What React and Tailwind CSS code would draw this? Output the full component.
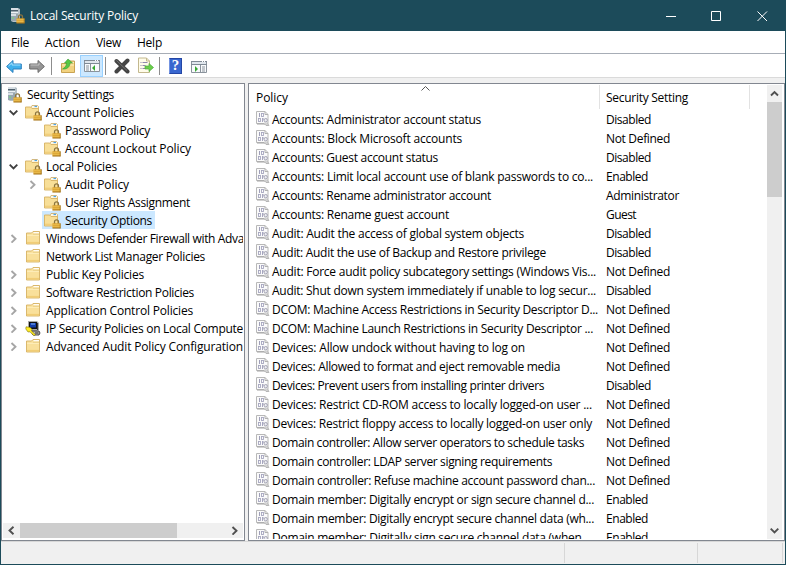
import React, { useLayoutEffect, useRef, useState } from "react";

// A label whose tracking is adjusted so that the text spans exactly `w` pixels.
function Fit({ w, pad = "pt-px", children }) {
  const ref = useRef(null);
  const [spacing, setSpacing] = useState(0);
  useLayoutEffect(() => {
    const natural = ref.current.getBoundingClientRect().width;
    setSpacing((w - natural) / children.length);
  }, [w, children]);
  return (
    <span ref={ref} className={`inline-block shrink-0 ${pad}`} style={{ letterSpacing: `${spacing}px` }}>
      {children}
    </span>
  );
}

const Padlock = ({ x = 8, y = 7 }) => (
  <g transform={`translate(${x} ${y})`}>
    <path d="M2 4.5V2.6C2 1.2 2.9.6 4 .6s2 .6 2 2v1.900" fill="none" stroke="#8a7440" strokeWidth="1.300" />
    <rect x="0" y="4" width="8" height="5" fill="#d9a02c" />
    <path d="M0 5.500h8M0 7.500h8" stroke="#f3cc62" strokeWidth="0.800" />
    <path d="M0 8.700h8M7.700 4v5" stroke="#8f651a" strokeWidth="0.700" />
  </g>
);

const ServerIcon = () => (
  <svg className="block h-[17px] w-4 shrink-0" viewBox="0 0 16 17">
    <path d="M1 1h7l2 1v13H3l-2-1z" fill="#b5c0c7" />
    <path d="M1 1h7v13H1z" fill="#98a7b0" />
    <path d="M1 2h7M1 5.500h7M1 8h5" stroke="#edf2f5" strokeWidth="1.300" />
    <path d="M1 3.700h7" stroke="#3d515e" strokeWidth="1" />
    <path d="M2 11h2" stroke="#6fe06f" strokeWidth="1" />
    <Padlock x={6.500} y={7.300} />
  </svg>
);

const FolderIcon = ({ locked }) => (
  <svg className="block h-[17px] w-[17px] shrink-0" viewBox="0 0 17 17">
    {locked ? (
      <>
        <path d="M6 3l1-1.500h5.500l1 1V10H6z" fill="#fdf7e3" stroke="#cdaa62" strokeWidth="0.800" />
        <path d="M9.500 2.500h2.500" stroke="#4da3e8" strokeWidth="1.200" />
        <path d="M.5 3h5L7 4.500h6.500v9.500H.5z" fill="#f8df98" stroke="#d6b162" strokeWidth="0.900" />
        <path d="M1 12.500h11" stroke="#f1cf7c" strokeWidth="1.800" />
        <Padlock x={8.500} y={7.300} />
      </>
    ) : (
      <>
        <path d="M1.500 3h5L8 1.500h6.500v12.500h-13z" fill="#f9e09b" stroke="#d6b162" strokeWidth="0.900" />
        <path d="M8.500 2.700h5.500" stroke="#fff" strokeWidth="1.200" />
        <path d="M8 4.300h6" stroke="#d9b86b" strokeWidth="0.600" />
        <path d="M2 5.300h12" stroke="#fff3c8" strokeWidth="0.800" />
        <path d="M2 12.700h12" stroke="#f1cd76" strokeWidth="1.600" />
      </>
    )}
  </svg>
);

const IpIcon = () => (
  <svg className="block h-[17px] w-[17px] shrink-0" viewBox="0 0 17 17">
    <path d="M3 1h9l2 2v7l-2 1H5L3 10z" fill="#a8a8a8" />
    <path d="M4 2h8v7H4z" fill="#111" />
    <path d="M5 3h6v4.500H5z" fill="#123ca8" />
    <path d="M6 4h4" stroke="#82b7ff" />
    <path d="M12.500 3v7" stroke="#333" />
    <path d="M6 11h8l1 2-1 2H8z" fill="#b7b7b7" stroke="#222" strokeWidth="0.800" />
    <path d="M10 13h3.500" stroke="#333" />
    <path d="M1 6.800l4 .5 2 2-.5 1.500 4 4-1.500 1-4-4-2 .2L.8 9z" fill="#ffed26" stroke="#665900" strokeWidth="0.500" />
  </svg>
);

const PolicyIcon = () => (
  <svg className="block h-[15px] w-[14px] shrink-0" viewBox="0 0 14 15">
    <path d="M.5.5h8.500l3 3v9.500l1 1.500h-3l-2-2H.5z" fill="#fafafa" stroke="#b8b8b8" />
    <path d="M9 .5v3h3" fill="none" stroke="#b0b0b0" />
    <path d="M1 13h7" stroke="#a4a4a4" />
    <path d="M3.500 2v4M7.500 7.500v1" stroke="#9f9fb8" />
    <rect x="5.500" y="2.500" width="2" height="3" fill="none" stroke="#a6a6bf" strokeWidth="0.900" />
    <rect x="2.500" y="7.500" width="2" height="3" fill="none" stroke="#a6a6bf" strokeWidth="0.900" />
    <path d="M6.500 7v4" stroke="#a6a6bf" />
    <circle cx="9.700" cy="9.200" r="1.700" fill="#ededf3" stroke="#9b9bab" strokeWidth="0.900" />
    <path d="M9 11.500v2.500M11 11.500v3" stroke="#aaa" />
  </svg>
);

const Chevron = ({ dir, className = "" }) => {
  const d = { right: "M2.500 1l4 3.800-4 3.800", left: "M6.500 0.700l-4 3.800 4 3.800", up: "M1 6.500l3.500-3.500L8 6.500", down: "M.7 2.700l3.800 3.800 3.800-3.800" }[dir];
  return (
    <svg className={`block h-[9px] w-[9px] shrink-0 ${className}`} viewBox="0 0 9 9">
      <path d={d} fill="none" stroke="currentColor" strokeWidth="1.900" />
    </svg>
  );
};

const tree = [
  { t: "Account Policies", w: 88, level: 1, state: "down", icon: "lock" },
  { t: "Password Policy", w: 85, level: 2, icon: "lock" },
  { t: "Account Lockout Policy", w: 126, level: 2, icon: "lock" },
  { t: "Local Policies", w: 71, level: 1, state: "down", icon: "lock" },
  { t: "Audit Policy", w: 64, level: 2, state: "right", icon: "lock" },
  { t: "User Rights Assignment", w: 125, level: 2, icon: "lock" },
  { t: "Security Options", w: 87, level: 2, icon: "lock", selected: true },
  { t: "Windows Defender Firewall with Adva", w: 198, level: 1, state: "right" },
  { t: "Network List Manager Policies", w: 159, level: 1 },
  { t: "Public Key Policies", w: 98, level: 1, state: "right" },
  { t: "Software Restriction Policies", w: 148, level: 1, state: "right" },
  { t: "Application Control Policies", w: 147, level: 1, state: "right" },
  { t: "IP Security Policies on Local Compute", w: 197, level: 1, state: "right", icon: "ip" },
  { t: "Advanced Audit Policy Configuration", w: 197, level: 1, state: "right" },
];

const policies = [
  ["Accounts: Administrator account status", 209, "Disabled"],
  ["Accounts: Block Microsoft accounts", 190, "Not Defined"],
  ["Accounts: Guest account status", 166, "Disabled"],
  ["Accounts: Limit local account use of blank passwords to co...", 321, "Enabled"],
  ["Accounts: Rename administrator account", 219, "Administrator"],
  ["Accounts: Rename guest account", 177, "Guest"],
  ["Audit: Audit the access of global system objects", 252, "Disabled"],
  ["Audit: Audit the use of Backup and Restore privilege", 274, "Disabled"],
  ["Audit: Force audit policy subcategory settings (Windows Vis...", 324, "Not Defined"],
  ["Audit: Shut down system immediately if unable to log secur...", 324, "Disabled"],
  ["DCOM: Machine Access Restrictions in Security Descriptor D...", 326, "Not Defined"],
  ["DCOM: Machine Launch Restrictions in Security Descriptor ...", 321, "Not Defined"],
  ["Devices: Allow undock without having to log on", 253, "Not Defined"],
  ["Devices: Allowed to format and eject removable media", 288, "Not Defined"],
  ["Devices: Prevent users from installing printer drivers", 272, "Disabled"],
  ["Devices: Restrict CD-ROM access to locally logged-on user ...", 320, "Not Defined"],
  ["Devices: Restrict floppy access to locally logged-on user only", 320, "Not Defined"],
  ["Domain controller: Allow server operators to schedule tasks", 312, "Not Defined"],
  ["Domain controller: LDAP server signing requirements", 280, "Not Defined"],
  ["Domain controller: Refuse machine account password chan...", 323, "Not Defined"],
  ["Domain member: Digitally encrypt or sign secure channel d...", 322, "Enabled"],
  ["Domain member: Digitally encrypt secure channel data (wh...", 322, "Enabled"],
  ["Domain member: Digitally sign secure channel data (when ...", 321, "Enabled"],
];

const valueWidths = { Disabled: 45, "Not Defined": 64, Enabled: 42, Administrator: 73, Guest: 30 };

function TreeRow({ node }) {
  return (
    <div className={`flex h-[18px] shrink-0 items-center ${node.level === 2 ? "pl-[25px]" : "pl-[6px]"}`}>
      <div className="flex w-[14px] shrink-0">
        {node.state && <Chevron dir={node.state} className={node.state === "down" ? "text-[#404040]" : "text-[#a6a6a6]"} />}
      </div>
      <div className={`flex h-[18px] items-center pl-[2px] pr-[3px] ${node.selected ? "bg-[#cce8ff]" : ""}`}>
        {node.icon === "ip" ? <IpIcon /> : <FolderIcon locked={node.icon === "lock"} />}
        <div className="ml-1 flex"><Fit w={node.w}>{node.t}</Fit></div>
      </div>
    </div>
  );
}

const Separator = ({ className }) => <div className={`h-[18px] w-px shrink-0 bg-[#8d8d8d] ${className}`} />;

function ConsoleIcon({ flipped, className = "" }) {
  return (
    <svg className={`h-[14px] w-4 shrink-0 ${className}`} viewBox="0 0 16 14">
      <path d="M.5 1.500h15v11H.5z" fill="#f8fafc" stroke="#8a939c" />
      <path d="M0 1.500h16M0 4.500h16" stroke="#7f8a95" />
      <path d="M1 3h14" stroke="#c6d1dc" />
      <path d="M11 1.500h1M13 1.500h1" stroke="#fff" />
      {flipped ? (
        <>
          <path d="M9.500 5v8" stroke="#8a939c" />
          <path d="M11 7h3M11 9h3M11 11h3" stroke="#8a939c" />
          <path d="M4 6v6l3-3z" fill="#36a832" />
        </>
      ) : (
        <>
          <path d="M6.500 5v8" stroke="#8a939c" />
          <path d="M2 7h3M2 9h3M2 11h3" stroke="#8a939c" />
          <path d="M11 6v6L8 9z" fill="#36a832" />
        </>
      )}
    </svg>
  );
}

function Toolbar() {
  return (
    <div className="flex h-6 shrink-0 items-center border-b border-[#dadada] bg-white pl-[5px]">
      <svg className="h-4 w-4 shrink-0" viewBox="0 0 16 16">
        <path d="M.6 8.500l6.400-6v3.500h8.300v5H7v3.500z" fill="#3fb0ec" stroke="#2b7fbd" />
        <path d="M2.500 8L6 4.800v2.200h8.500" fill="none" stroke="#a2e1ff" />
      </svg>
      <svg className="ml-[7px] h-4 w-4 shrink-0" viewBox="0 0 16 16">
        <path d="M15.400 8.500L9 2.500V6H.7v5H9v3.500z" fill="#969696" stroke="#6a6a6a" />
        <path d="M1.500 7H10V4.800" fill="none" stroke="#c4c4c4" />
      </svg>
      <Separator className="ml-[6px]" />
      <svg className="ml-2 h-4 w-4 shrink-0" viewBox="0 0 16 16">
        <path d="M1.500 5.500h6L9 3h5.500v11.500h-13z" fill="#f2d27f" stroke="#c9a352" />
        <path d="M9.500 4.500H14M2 7h12" stroke="#fff0bd" />
        <path d="M2.500 11C5 9.500 6.500 8 6.500 5H4.500L8 1l4.500 4H10c0 4-3 6.500-7.500 6z" fill="#57c743" stroke="#3b9a35" strokeWidth="0.600" />
      </svg>
      <div className="ml-1 flex h-[22px] w-[23px] shrink-0 items-center justify-center border border-[#99d1ff] bg-[#cce8ff]">
        <ConsoleIcon />
      </div>
      <Separator className="ml-[2px]" />
      <svg className="ml-2 h-4 w-4 shrink-0" viewBox="0 0 16 16">
        <path d="M2.500 3l11 10.500M13.500 2.500L2.500 13.500" stroke="#444" strokeWidth="4" strokeLinecap="round" />
        <path d="M2.500 2.500l10.500 10" stroke="#777" strokeWidth="0.900" />
      </svg>
      <svg className="ml-2 h-[17px] w-4 shrink-0" viewBox="0 0 16 17">
        <path d="M.5 1h8l3 3v11.500H.5z" fill="#fffce9" stroke="#c3b88e" />
        <path d="M8.500 1v3h3" fill="none" stroke="#c3b88e" />
        <path d="M2.500 5.500h1M4.500 5.500h5M2.500 8.500h1M4.500 8.500h3M2.500 11.500h1M4.500 11.500h3" stroke="#8f88ad" />
        <path d="M7 9h4V6.500l4.500 4-4.500 4V12H7z" fill="#6bcf49" stroke="#4dab3e" strokeWidth="0.700" />
      </svg>
      <Separator className="ml-[5px]" />
      <div className="ml-[9px] flex h-4 w-[13px] shrink-0 items-center justify-center border border-[#2446a5] border-l-[#7393e1] bg-[#3967cf] font-['Liberation_Serif',serif] text-[15px] font-bold leading-none text-white">?</div>
      <ConsoleIcon flipped className="ml-[9px] mt-[2px]" />
    </div>
  );
}

export default function App() {
  return (
    <div className="flex h-[565px] w-[786px] flex-col overflow-hidden whitespace-nowrap border border-t-0 border-[#1c4b5a] bg-[#f0f0f0] font-['Open_Sans','Noto_Sans',sans-serif] text-[12px] leading-[18px] text-black">
      <header className="flex h-[31px] shrink-0 items-center bg-[#1c4b5a] pl-[9px] text-white">
        <ServerIcon />
        <div className="ml-1 flex"><Fit w={108}>Local Security Policy</Fit></div>
        <svg className="ml-auto mr-4 h-3 w-[103px]" viewBox="0 0 103 12" fill="none" stroke="#fff">
          <path d="M0 6.500h10M45.500 1.500h9v9h-9zM91.500 1.500l9.500 9.500M101 1.500L91.500 11" />
        </svg>
      </header>
      <nav className="flex h-[23px] shrink-0 items-center border-b border-[#a7adb6] bg-white pl-[10px]">
        <div className="w-[34px]"><Fit w={18}>File</Fit></div>
        <div className="w-[51px]"><Fit w={35}>Action</Fit></div>
        <div className="w-[41px]"><Fit w={25}>View</Fit></div>
        <div><Fit w={25}>Help</Fit></div>
      </nav>
      <Toolbar />
      <main className="mt-[5px] flex h-[458px] shrink-0 gap-[3px]">
        <section className="flex w-[244px] flex-col overflow-hidden border border-[#828790] bg-white p-px">
          <div className="flex h-[438px] flex-col overflow-hidden">
            <div className="flex h-[18px] shrink-0 items-center pl-1">
              <ServerIcon />
              <div className="ml-1 flex"><Fit w={87}>Security Settings</Fit></div>
            </div>
            {tree.map((n) => <TreeRow key={n.t} node={n} />)}
          </div>
          <div className="flex h-[15px] items-center bg-[#f0f0f0] text-[#505050]">
            <div className="flex w-[17px] justify-center"><Chevron dir="left" /></div>
            <div className="h-full w-[157px] bg-[#cdcdcd]" />
            <Chevron dir="right" className="ml-auto mr-1" />
          </div>
        </section>
        <section className="flex w-[537px] overflow-hidden border border-[#828790] bg-white py-px pr-[2px]">
          <div className="flex min-w-0 flex-1 flex-col overflow-hidden">
            <div className="flex h-6 shrink-0">
              <div className="flex w-[351px] items-center border-r border-[#e2e2e2] pl-[7px]">
                <div className="w-[165px]"><Fit w={32}>Policy</Fit></div>
                <svg className="mb-[17px] h-[5px] w-[9px]" viewBox="0 0 9 5"><path d="M.5 4.500l4-4 4 4" fill="none" stroke="#555" /></svg>
              </div>
              <div className="flex w-[150px] items-center border-r border-[#e2e2e2] pl-[6px]"><Fit w={82}>Security Setting</Fit></div>
            </div>
            {policies.map(([name, w, value]) => (
              <div key={name} className="flex h-[19px] shrink-0 items-center pl-[7px]">
                <PolicyIcon />
                <div className="ml-[2px] flex w-[334px] shrink-0"><Fit w={w} pad="pt-[2px]">{name}</Fit></div>
                <Fit w={valueWidths[value]} pad="pt-[2px]">{value}</Fit>
              </div>
            ))}
          </div>
          <div className="flex w-[15px] shrink-0 flex-col items-center bg-[#f0f0f0] text-[#505050]">
            <div className="flex h-[17px] items-center"><Chevron dir="up" /></div>
            <div className="h-[95px] w-full bg-[#cdcdcd]" />
            <Chevron dir="down" className="mb-1 mt-auto" />
          </div>
        </section>
      </main>
      <footer className="flex min-h-0 flex-1 border-t border-[#d7d7d7] py-px">
        <div className="w-[564px] border-r border-[#d7d7d7]" />
        <div className="w-[133px] border-r border-[#d7d7d7]" />
        <div className="w-[85px] border-r border-[#d7d7d7]" />
      </footer>
    </div>
  );
}
